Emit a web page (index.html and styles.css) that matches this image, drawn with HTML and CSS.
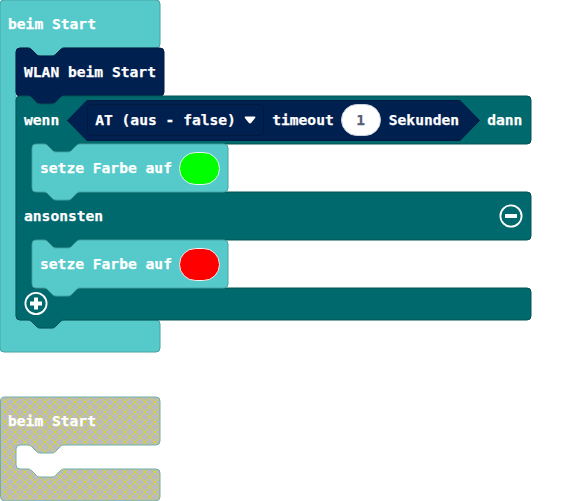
FILE: index.html
```html
<!DOCTYPE html>
<html lang="de">
<head>
<meta charset="utf-8">
<title>Blöcke</title>
<link rel="stylesheet" href="styles.css">
</head>
<body>
<main class="workspace">
  <section class="block start">
    <svg class="outline" width="161" height="352"><path class="cyan" d="M0 4a4 4 0 0 1 4-4H156a4 4 0 0 1 4 4V44a4 4 0 0 1-4 4H64c-2 0-3 1-4 2l-4 4c-1 1-2 2-4 2H40c-2 0-3-1-4-2l-4-4c-1-1-2-2-4-2H20a4 4 0 0 0-4 4V316a4 4 0 0 0 4 4H28c2 0 3 1 4 2l4 4c1 1 2 2 4 2H52c2 0 3-1 4-2l4-4c1-1 2-2 4-2H156a4 4 0 0 1 4 4V348a4 4 0 0 1-4 4H4a4 4 0 0 1-4-4Z"/></svg>
    <div class="row">beim Start</div>
    <div class="mouth">
      <div class="block">
        <svg class="outline" width="150" height="58"><path class="navy" d="M0 4a4 4 0 0 1 4-4H12c2 0 3 1 4 2l4 4c1 1 2 2 4 2H36c2 0 3-1 4-2l4-4c1-1 2-2 4-2H144a4 4 0 0 1 4 4V44a4 4 0 0 1-4 4H48c-2 0-3 1-4 2l-4 4c-1 1-2 2-4 2H24c-2 0-3-1-4-2l-4-4c-1-1-2-2-4-2H4a4 4 0 0 1-4-4Z"/></svg>
        <div class="row">WLAN beim Start</div>
      </div>
      <div class="block condition">
        <svg class="outline" width="517" height="234"><path class="teal" d="M0 4a4 4 0 0 1 4-4H12c2 0 3 1 4 2l4 4c1 1 2 2 4 2H36c2 0 3-1 4-2l4-4c1-1 2-2 4-2H511a4 4 0 0 1 4 4V44a4 4 0 0 1-4 4H64c-2 0-3 1-4 2l-4 4c-1 1-2 2-4 2H40c-2 0-3-1-4-2l-4-4c-1-1-2-2-4-2H20a4 4 0 0 0-4 4V92a4 4 0 0 0 4 4H511a4 4 0 0 1 4 4V140a4 4 0 0 1-4 4H64c-2 0-3 1-4 2l-4 4c-1 1-2 2-4 2H40c-2 0-3-1-4-2l-4-4c-1-1-2-2-4-2H20a4 4 0 0 0-4 4V188a4 4 0 0 0 4 4H511a4 4 0 0 1 4 4V220a4 4 0 0 1-4 4H48c-2 0-3 1-4 2l-4 4c-1 1-2 2-4 2H24c-2 0-3-1-4-2l-4-4c-1-1-2-2-4-2H4a4 4 0 0 1-4-4Z"/></svg>
        <div class="row">
          <span>wenn</span>
          <div class="value">
            <svg class="outline" width="414" height="41"><path class="navy" d="M21 .5H394L413.500 20.500 394 40.500H21L1.500 20.500Z"/></svg>
            <div class="dropdown">AT (aus - false)<svg class="arrow" width="12" height="8"><path d="M1.500 0.500h9q1.500 0 .6 1.400L7.300 6.800q-1.300 1.200-2.600 0L.9 1.900Q0 .5 1.500.5Z"/></svg></div>
            <span>timeout</span>
            <span class="number">1</span>
            <span>Sekunden</span>
          </div>
          <span>dann</span>
        </div>
        <div class="mouth">
          <div class="block">
            <svg class="outline" width="198" height="58"><path class="cyan" d="M0 4a4 4 0 0 1 4-4H12c2 0 3 1 4 2l4 4c1 1 2 2 4 2H36c2 0 3-1 4-2l4-4c1-1 2-2 4-2H192a4 4 0 0 1 4 4V44a4 4 0 0 1-4 4H48c-2 0-3 1-4 2l-4 4c-1 1-2 2-4 2H24c-2 0-3-1-4-2l-4-4c-1-1-2-2-4-2H4a4 4 0 0 1-4-4Z"/></svg>
            <div class="row"><span>setze Farbe auf</span><span class="color green"></span></div>
          </div>
        </div>
        <div class="row between">
          <span>ansonsten</span>
          <svg class="icon" width="24" height="24"><circle cx="12" cy="12" r="10.600"/><path d="M6 12h12"/></svg>
        </div>
        <div class="mouth">
          <div class="block">
            <svg class="outline" width="198" height="58"><path class="cyan" d="M0 4a4 4 0 0 1 4-4H12c2 0 3 1 4 2l4 4c1 1 2 2 4 2H36c2 0 3-1 4-2l4-4c1-1 2-2 4-2H192a4 4 0 0 1 4 4V44a4 4 0 0 1-4 4H48c-2 0-3 1-4 2l-4 4c-1 1-2 2-4 2H24c-2 0-3-1-4-2l-4-4c-1-1-2-2-4-2H4a4 4 0 0 1-4-4Z"/></svg>
            <div class="row"><span>setze Farbe auf</span><span class="color red"></span></div>
          </div>
        </div>
        <div class="row foot">
          <svg class="icon" width="24" height="24"><circle cx="12" cy="12.500" r="10.600"/><path d="M6 12.500h12M12 6.500v12"/></svg>
        </div>
      </div>
    </div>
  </section>
  <section class="block disabled">
    <svg class="outline" width="161" height="105">
      <defs><pattern id="hatch" width="10" height="10" patternUnits="userSpaceOnUse"><rect width="10" height="10" fill="#bbb"/><path d="M0 0L10 10M10 0L0 10" stroke="#d6d62c"/></pattern></defs>
      <path class="hatched" d="M.5 4a4 4 0 0 1 4-4H156a4 4 0 0 1 4 4V44a4 4 0 0 1-4 4H64c-2 0-3 1-4 2l-4 4c-1 1-2 2-4 2H40c-2 0-3-1-4-2l-4-4c-1-1-2-2-4-2H20a4 4 0 0 0-4 4V68a4 4 0 0 0 4 4H28c2 0 3 1 4 2l4 4c1 1 2 2 4 2H52c2 0 3-1 4-2l4-4c1-1 2-2 4-2H156a4 4 0 0 1 4 4V99.800a4 4 0 0 1-4 4H4.500a4 4 0 0 1-4-4Z"/>
    </svg>
    <div class="row">beim Start</div>
  </section>
</main>
</body>
</html>
```
FILE: styles.css
```css
body {
  margin: 0;
  background: #fff;
}

.workspace {
  height: 501px;
  overflow: hidden;
  color: #fff;
  font: bold 14.62px/20px "DejaVu Sans Mono", monospace;
  white-space: nowrap;
  -webkit-text-stroke: 0.25px;
}

.block {
  position: relative;
  width: max-content;
}

.start {
  height: 352px;
}

.disabled {
  height: 104px;
  margin-top: 45px;
}

.condition {
  width: 515px;
}

.outline {
  position: absolute;
  top: 0;
  left: 0;
  overflow: visible;
}

.row {
  position: relative;
  display: flex;
  align-items: center;
  gap: 8px;
  box-sizing: border-box;
  height: 48px;
  padding: 0 8px;
}

.row.between {
  justify-content: space-between;
}

.row.foot {
  height: 32px;
  align-items: flex-start;
  padding-top: 3px;
}

.mouth {
  padding-left: 16px;
}

.cyan {
  fill: #56caca;
  stroke: #45a2a2;
}

.navy {
  fill: #00204f;
  stroke: #001a3f;
}

.teal {
  fill: #00696d;
  stroke: #005457;
}

.hatched {
  fill: url(#hatch);
  stroke: #70afb0;
}

.value {
  position: relative;
  display: flex;
  align-items: center;
  gap: 8px;
  box-sizing: border-box;
  width: 413px;
  height: 41px;
  margin-left: -1px;
  padding-left: 21px;
}

.value > span,
.dropdown {
  position: relative;
}

.dropdown {
  display: flex;
  align-items: center;
  justify-content: space-between;
  box-sizing: border-box;
  width: 177px;
  height: 32px;
  padding: 0 7px;
  border: 1px solid #001a3f;
  border-radius: 4px;
}

.arrow {
  fill: #fff;
}

.number {
  box-sizing: border-box;
  width: 40px;
  height: 32px;
  margin-left: -1px;
  border: 1px solid #ccd2dc;
  border-radius: 16px;
  background: #fff;
  color: #575e75;
  line-height: 30px;
  text-align: center;
}

.color {
  box-sizing: border-box;
  width: 41px;
  height: 33px;
  margin-left: -1px;
  border: 1px solid #e6f5f5;
  border-radius: 17px;
}

.green {
  background: #0f0;
}

.red {
  background: #f00;
}

.icon circle {
  fill: none;
  stroke: #fff;
  stroke-width: 1.8;
}

.icon path {
  fill: none;
  stroke: #fff;
  stroke-width: 4;
}
```
